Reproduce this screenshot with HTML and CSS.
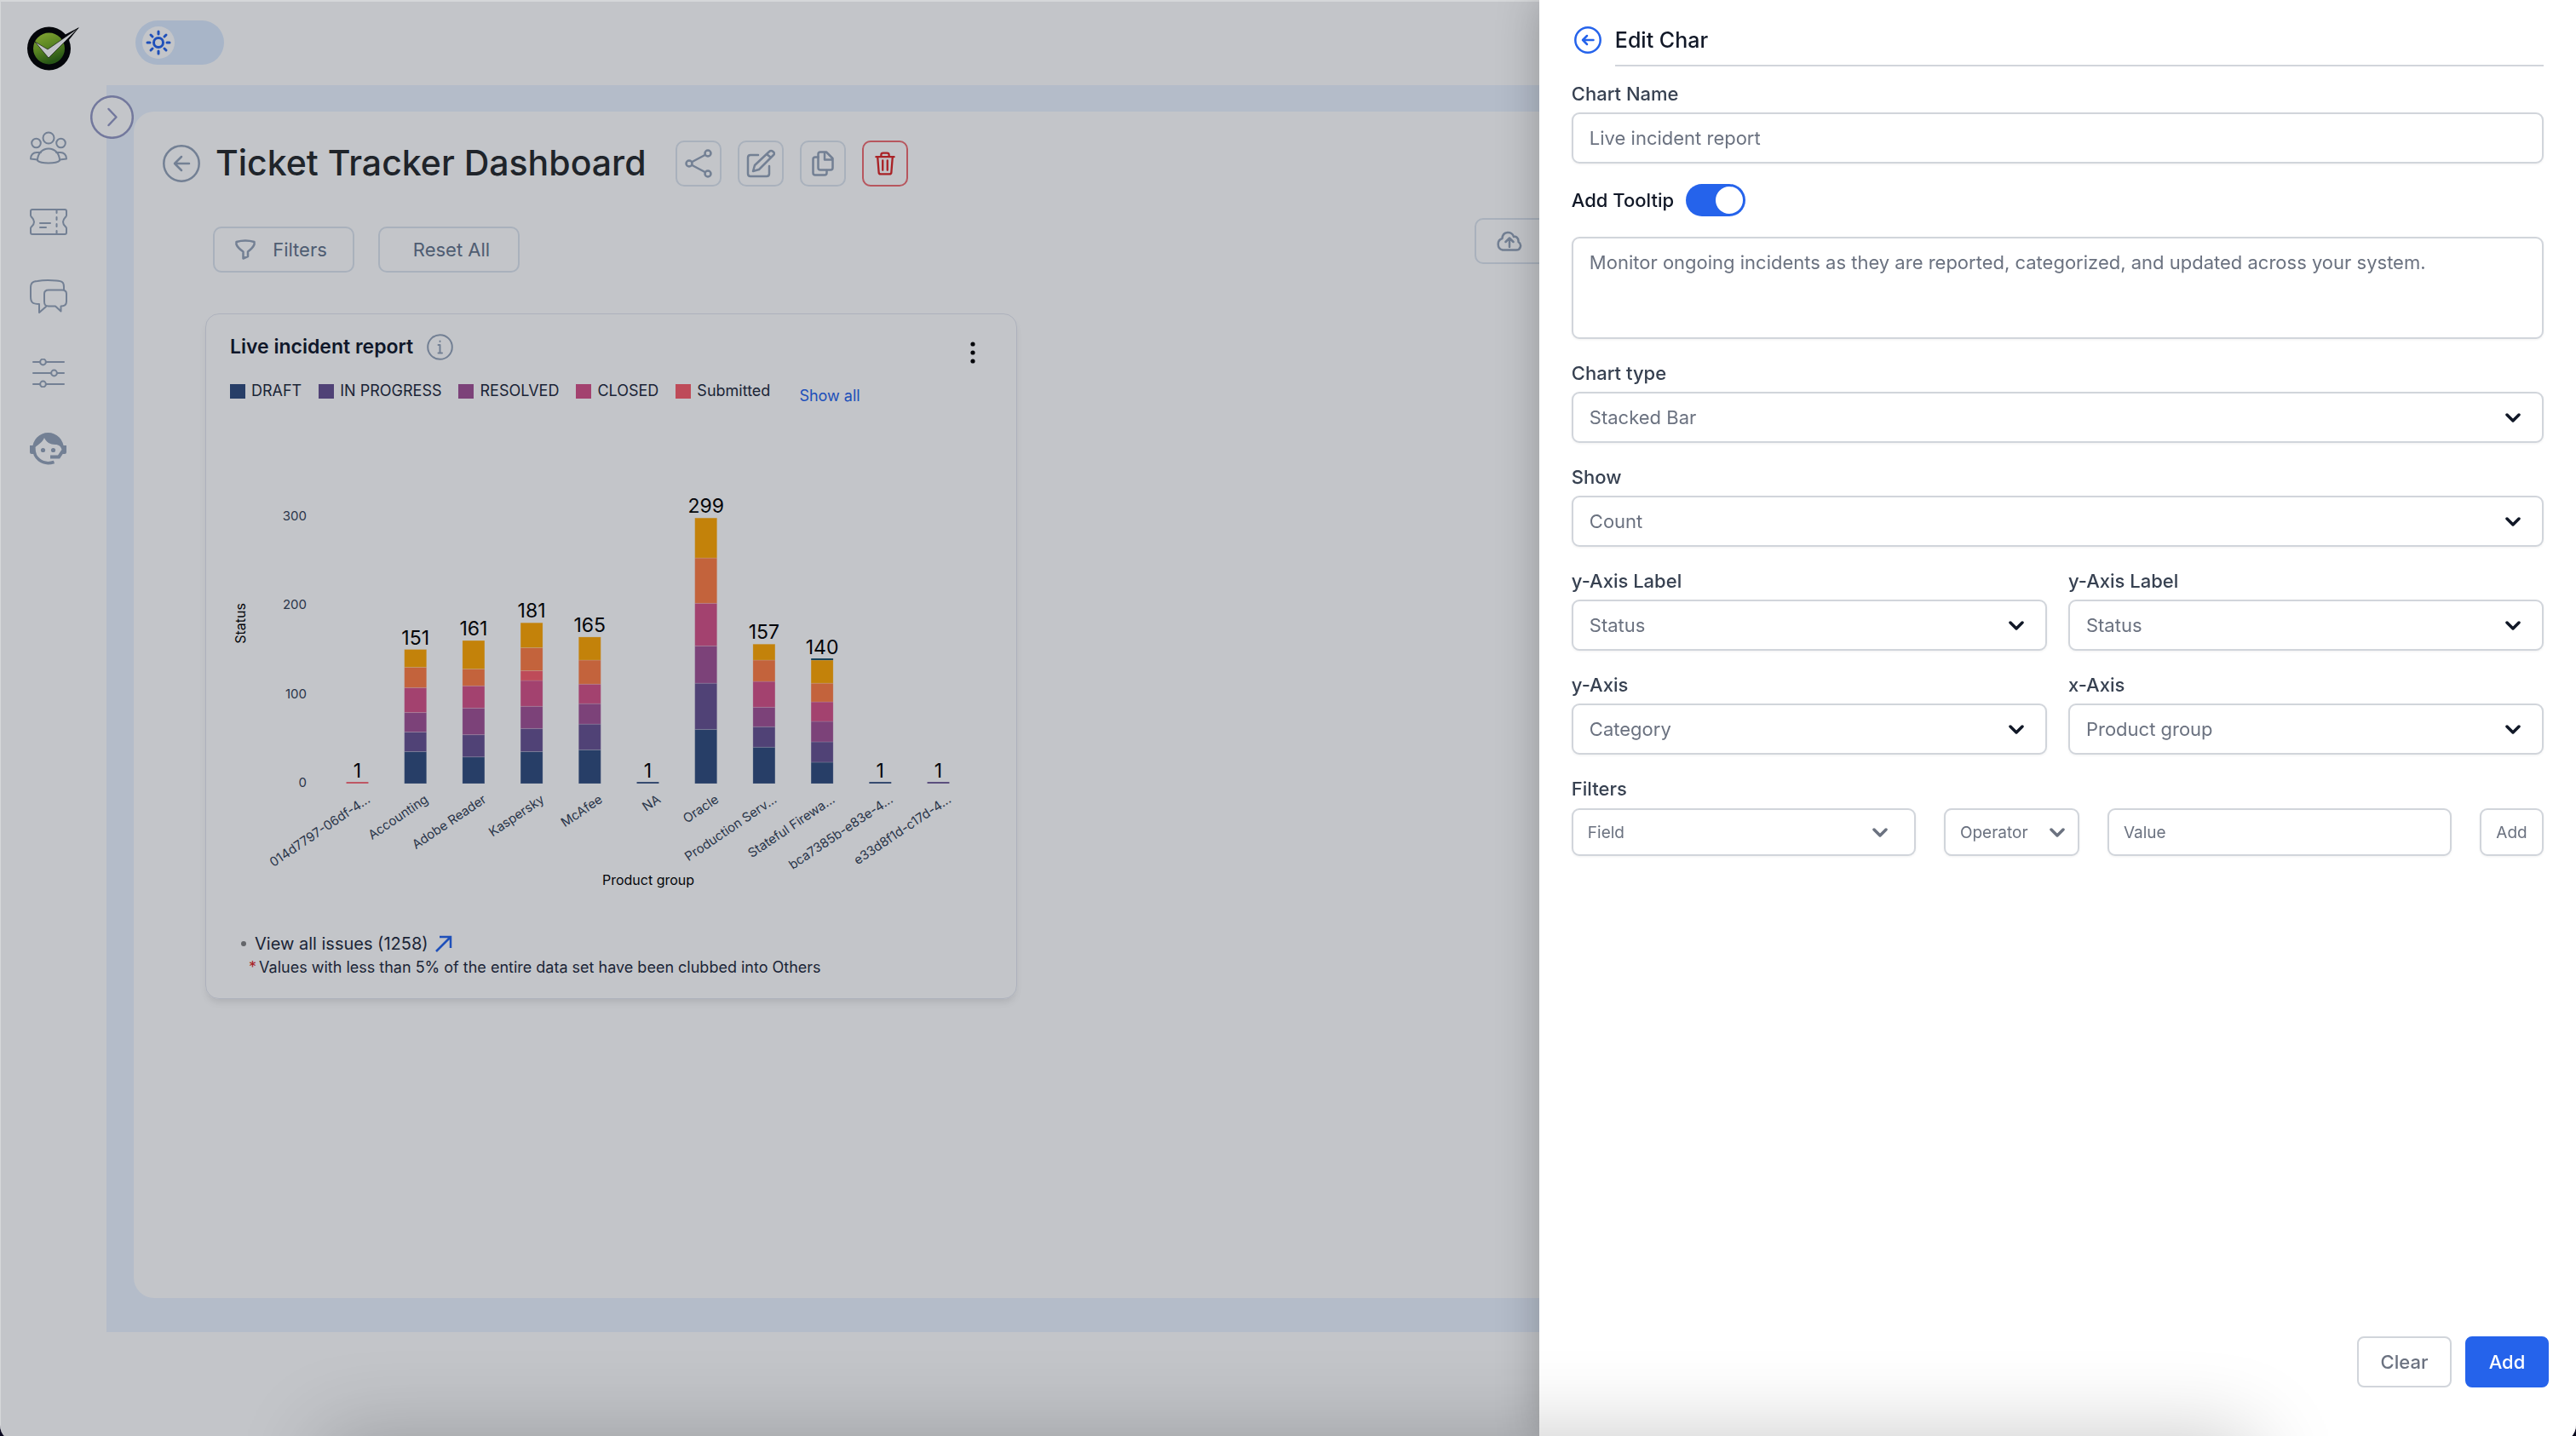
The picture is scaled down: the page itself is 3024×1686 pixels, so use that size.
FILE: index.html
```html
<!DOCTYPE html>
<html lang="en">
<head>
    <meta charset="UTF-8">
    <meta name="viewport" content="width=device-width, initial-scale=1.0">
    <title>Ticket Tracker Dashboard</title>
    <link rel="stylesheet" href="styles.css">
</head>
<body>
    <div class="app">
        <nav class="sidebar">
            <a href="#" class="logo" aria-label="Home">
                <svg width="62" height="52" viewBox="0 0 62 52">
                    <defs>
                        <linearGradient id="leaf" x1="0" y1="0" x2="0.4" y2="1">
                            <stop offset="0" stop-color="#b0d73a"/>
                            <stop offset="0.5" stop-color="#76ad22"/>
                            <stop offset="1" stop-color="#2f6a10"/>
                        </linearGradient>
                    </defs>
                    <path d="M44 22L61 1L36 14Z" fill="#000"/>
                    <circle cx="25.500" cy="26" r="25.500" fill="#000"/>
                    <circle cx="25.500" cy="26" r="18.500" fill="url(#leaf)"/>
                    <path d="M9 18L24 27L60 2L25 37Z" fill="#fff" stroke="#000" stroke-width="0.600"/>
                </svg>
            </a>
            <a href="#" aria-label="Users">
                <svg width="44" height="39" viewBox="0 0 44 39" class="line">
                    <circle cx="22" cy="8" r="6.500"/><circle cx="7.500" cy="14" r="5.300"/><circle cx="36.500" cy="14" r="5.300"/>
                    <path d="M9 34.500C9 26 15 20.500 22 20.500S35 26 35 34.500C31 38.500 13 38.500 9 34.500Z"/>
                    <path d="M9 33.500L1 32.500C1 28 4 25 8 25H13M35 33.500L43 32.500C43 28 40 25 36 25H31"/>
                </svg>
            </a>
            <a href="#" aria-label="Tickets">
                <svg width="44" height="31" viewBox="0 0 44 31" class="line">
                    <path d="M3 1H41Q43 1 43 3V8C43 10 39 11 39 15.500S43 21 43 23V28Q43 30 41 30H3Q1 30 1 28V23C1 21 5 20 5 15.500S1 10 1 8V3Q1 1 3 1Z"/>
                    <path d="M12 17H24M12 22H19M31.500 2V5M31.500 10V13M31.500 18V21M31.500 26V29"/>
                </svg>
            </a>
            <a href="#" aria-label="Chats">
                <svg width="44" height="41" viewBox="0 0 44 41" class="line">
                    <path d="M40 12V9C40 3 38 2 31 1.500C24 1 15 1 9 2C3 2.500 1 4 1 10V20C1 27 3 29 11 29V39L19 32"/>
                    <path d="M22 12.500H38C42 12.500 43 14 43 17V26C43 30 41 31.500 36.500 31.500V37.500L30 31.500H22C18 31.500 17 30 17 26V17C17 14 18 12.500 22 12.500Z"/>
                </svg>
            </a>
            <a href="#" aria-label="Settings">
                <svg width="38" height="34" viewBox="0 0 38 34" class="line">
                    <path d="M1 4H9M16 4H37M1 17H22M29 17H37M1 30H9M16 30H37"/>
                    <circle cx="12.500" cy="4" r="3.400"/><circle cx="25.500" cy="17" r="3.400"/><circle cx="12.500" cy="30" r="3.400"/>
                </svg>
            </a>
            <a href="#" aria-label="Support">
                <svg width="44" height="40" viewBox="0 0 44 40">
                    <g fill="#94a3b8">
                        <path d="M0 16H5V26H2Q0 26 0 24ZM43 16H38V26H41Q43 26 43 24Z"/>
                        <path d="M3 20A18.500 19 0 0 1 40 20L38 23C37 17 34 15 30 15C24 15 19 12 17 7C15 12 10 15 6.500 18Z"/>
                        <circle cx="15.500" cy="21.500" r="2.600"/><circle cx="27.500" cy="21.500" r="2.600"/>
                    </g>
                    <path d="M5 18C4 30 14 40 28.500 35.500" fill="none" stroke="#94a3b8" stroke-width="3.500"/>
                    <path d="M24 29.500H34L39 22" fill="none" stroke="#94a3b8" stroke-width="4"/>
                </svg>
            </a>
        </nav>

        <div class="content">
            <header class="topbar">
                <label class="theme-toggle">
                    <input type="checkbox" aria-label="Dark theme">
                    <svg width="38" height="38" viewBox="0 0 38 38">
                        <circle cx="19" cy="19" r="19" fill="#fff"/>
                        <g fill="none" stroke="#2563eb" stroke-width="3" stroke-linecap="round">
                            <circle cx="19" cy="19" r="5.500"/>
                            <path d="M19 6V9M19 29V32M6 19H9M29 19H32M10 10L12 12M26 26L28 28M10 28L12 26M26 12L28 10"/>
                        </g>
                    </svg>
                </label>
            </header>

            <main class="workspace">
                <button class="expand" aria-label="Expand menu">
                    <svg width="51" height="51" viewBox="0 0 51 51">
                        <circle cx="25.500" cy="25.500" r="24.300"/>
                        <path d="M21.500 16L30.500 25.500L21.500 35"/>
                    </svg>
                </button>

                <section class="panel">
                    <div class="title-row">
                        <a href="#" class="back" aria-label="Back">
                            <svg width="44" height="44" viewBox="0 0 44 44" class="line thick">
                                <circle cx="22" cy="22" r="20.700"/>
                                <path d="M31 22H14M22 14L14 22L22 30"/>
                            </svg>
                        </a>
                        <h1>Ticket Tracker Dashboard</h1>
                        <div class="actions">
                            <button class="btn icon" aria-label="Share">
                                <svg width="32" height="34" viewBox="0 0 32 34" class="line thick">
                                    <circle cx="5" cy="17" r="3.500"/><circle cx="27" cy="5" r="3.500"/><circle cx="27" cy="29" r="3.500"/>
                                    <path d="M8.500 15L23.500 7M8.500 19L23.500 27"/>
                                </svg>
                            </button>
                            <button class="btn icon" aria-label="Edit">
                                <svg width="34" height="34" viewBox="0 0 34 34" class="line thick">
                                    <path d="M14 7H5Q2 7 2 10V29Q2 32 5 32H24Q27 32 27 29V20"/>
                                    <path d="M8 26L10 19L27 3Q29 1 31.500 3T32 7L15 24ZM24 6L29 10"/>
                                </svg>
                            </button>
                            <button class="btn icon" aria-label="Copy">
                                <svg width="26" height="30" viewBox="0 0 26 30" class="line thick">
                                    <path d="M10 1.500H17L24.500 9V20Q24.500 22.500 22 22.500H10Q7.500 22.500 7.500 20V4Q7.500 1.500 10 1.500ZM15 2V10.500H24"/>
                                    <path d="M7.500 7.500H4Q1.500 7.500 1.500 10V26Q1.500 28.500 4 28.500H15Q17.500 28.500 17.500 26V23"/>
                                </svg>
                            </button>
                            <button class="btn icon danger" aria-label="Delete">
                                <svg width="24" height="30" viewBox="0 0 26 30" class="line thick">
                                    <path d="M1.500 6.500H24.500M8 6V4Q8 1.500 10.500 1.500H15.500Q18 1.500 18 4V6M3.500 7L5 26Q5 28.500 7.500 28.500H18.500Q21 28.500 21 26L22.500 7M10 11V23.500M16 11V23.500"/>
                                </svg>
                            </button>
                        </div>
                    </div>

                    <div class="toolbar">
                        <div class="toolbar-left">
                            <button class="btn wide filters">
                                <svg width="24" height="24" viewBox="0 0 24 24" class="line thick">
                                    <path d="M1.500 3Q12 0 22.500 3V6Q21 10 15 14.500V20L9.500 22.500V14.500Q3 10 1.500 6Z"/>
                                </svg>
                                Filters
                            </button>
                            <button class="btn wide reset">Reset All</button>
                        </div>
                        <div class="toolbar-right">
                            <button class="btn export" aria-label="Export">
                                <svg width="30" height="24" viewBox="0 0 30 24" class="line thick">
                                    <path d="M7 22.500H23C28 22.500 30 16 25.500 13C26 8 22 6 20 7C18 0 7 0 6.500 9C0 11 0 21 7 22.500ZM15 19V9M10.500 13L15 8.500L19.500 13"/>
                                </svg>
                            </button>
                        </div>
                    </div>

                    <article class="card">
                        <div class="card-head">
                            <h2>Live incident report</h2>
                            <svg width="31" height="31" viewBox="0 0 31 31" class="line">
                                <circle cx="15.500" cy="15.500" r="14.300"/>
                                <path d="M13.500 13H15.500V22M13.500 22.500H18M15.500 8.500V9"/>
                            </svg>
                            <button class="kebab" aria-label="More">
                                <svg width="6" height="28" viewBox="0 0 6 28"><circle cx="3" cy="4" r="2.600"/><circle cx="3" cy="14" r="2.600"/><circle cx="3" cy="24" r="2.600"/></svg>
                            </button>
                        </div>
                        <ul class="legend">
                            <li><i class="draft"></i>DRAFT</li>
                            <li><i class="progress"></i>IN PROGRESS</li>
                            <li><i class="resolved"></i>RESOLVED</li>
                            <li><i class="closed"></i>CLOSED</li>
                            <li><i class="submitted"></i>Submitted</li>
                            <li class="show-all"><a href="#">Show all</a></li>
                        </ul>
                        <svg id="chart" class="chart" viewBox="0 0 895 587" role="img" aria-label="Tickets by product group and status"></svg>
                        <div class="card-foot">
                            <a href="#" class="view-all">View all issues (1258)
                                <svg width="20" height="20" viewBox="0 0 20 20"><path d="M1 19L18 2M5 2H18V15"/></svg>
                            </a>
                            <p class="note"><span>*</span>Values with less than 5% of the entire data set have been clubbed into Others</p>
                        </div>
                    </article>
                </section>
            </main>
        </div>
    </div>

    <div class="overlay"></div>

    <aside class="drawer">
        <div class="drawer-head">
            <a href="#" aria-label="Close">
                <svg width="32" height="32" viewBox="0 0 32 32">
                    <circle cx="16" cy="16" r="14.700"/>
                    <path d="M22.500 16H10M15 11L10 16L15 21"/>
                </svg>
            </a>
            <h2>Edit Char</h2>
        </div>
        <form class="drawer-form" onsubmit="return false">
            <div class="stack">
                <div class="field">
                    <label for="name">Chart Name</label>
                    <input type="text" id="name" class="control" value="Live incident report">
                </div>
                <div class="switch-row">
                    <label for="tip">Add Tooltip</label>
                    <input type="checkbox" id="tip" class="switch" checked>
                </div>
                <textarea class="control" aria-label="Tooltip text">Monitor ongoing incidents as they are reported, categorized, and updated across your system.</textarea>
            </div>
            <div class="field">
                <label for="type">Chart type</label>
                <div class="select"><select id="type" class="control"><option>Stacked Bar</option></select><svg width="18" height="12" viewBox="0 0 18 12"><path d="M2 2L9 9L16 2"/></svg></div>
            </div>
            <div class="field">
                <label for="show">Show</label>
                <div class="select"><select id="show" class="control"><option>Count</option></select><svg width="18" height="12" viewBox="0 0 18 12"><path d="M2 2L9 9L16 2"/></svg></div>
            </div>
            <div class="pair">
                <div class="field">
                    <label for="yl1">y-Axis Label</label>
                    <div class="select"><select id="yl1" class="control"><option>Status</option></select><svg width="18" height="12" viewBox="0 0 18 12"><path d="M2 2L9 9L16 2"/></svg></div>
                </div>
                <div class="field">
                    <label for="yl2">y-Axis Label</label>
                    <div class="select"><select id="yl2" class="control"><option>Status</option></select><svg width="18" height="12" viewBox="0 0 18 12"><path d="M2 2L9 9L16 2"/></svg></div>
                </div>
                <div class="field">
                    <label for="ya">y-Axis</label>
                    <div class="select"><select id="ya" class="control"><option>Category</option></select><svg width="18" height="12" viewBox="0 0 18 12"><path d="M2 2L9 9L16 2"/></svg></div>
                </div>
                <div class="field">
                    <label for="xa">x-Axis</label>
                    <div class="select"><select id="xa" class="control"><option>Product group</option></select><svg width="18" height="12" viewBox="0 0 18 12"><path d="M2 2L9 9L16 2"/></svg></div>
                </div>
            </div>
            <div class="field">
                <label for="ff">Filters</label>
                <div class="filter-row">
                    <div class="select grow"><select id="ff" class="control"><option>Field</option></select><svg width="18" height="12" viewBox="0 0 18 12"><path d="M2 2L9 9L16 2"/></svg></div>
                    <div class="select op"><select class="control" aria-label="Operator"><option>Operator</option></select><svg width="18" height="12" viewBox="0 0 18 12"><path d="M2 2L9 9L16 2"/></svg></div>
                    <div class="grow"><input type="text" class="control" placeholder="Value" aria-label="Value"></div>
                    <button class="control add">Add</button>
                </div>
            </div>
        </form>
        <div class="drawer-foot">
            <button class="clear">Clear</button>
            <button class="primary">Add</button>
        </div>
    </aside>

    <div class="dock-shadow"></div>

    <script>
        const colors = ['#2f4b7c', '#665191', '#a05195', '#d45087', '#f95d6a', '#ff7c43', '#ffa600', '#003f5c'];
        const groups = [
            ['014d7797-06df-4...', [0, 0, 0, 0, 1]],
            ['Accounting', [36, 22, 22, 28, 0, 23, 20]],
            ['Adobe Reader', [30, 25, 30, 25, 0, 19, 32]],
            ['Kaspersky', [36, 26, 25, 29, 11, 26, 28]],
            ['McAfee', [38, 29, 23, 22, 0, 27, 26]],
            ['NA', [1]],
            ['Oracle', [61, 52, 42, 48, 0, 51, 45]],
            ['Production Serv...', [41, 23, 22, 29, 0, 24, 18]],
            ['Stateful Firewa...', [24, 23, 23, 22, 0, 21, 26, 1]],
            ['bca7385b-e83e-4...', [1]],
            ['e33d8f1d-c17d-4...', [0, 1]]
        ];
        const base = 437;
        const unit = 1.043;
        const barWidth = 26;
        let out = '';

        for (let v = 0; v <= 300; v += 100) {
            out += `<text class="tick" x="90" y="${base + 4 - v * unit}" text-anchor="end">${v}</text>`;
        }

        groups.forEach(([name, values], i) => {
            const x = 149.5 + i * 68.2;
            let sum = 0;
            values.forEach((v, k) => {
                if (!v) return;
                const h = Math.max(v * unit, 2);
                out += `<rect x="${x - barWidth / 2}" y="${base - sum * unit - h}" width="${barWidth}" height="${h}" fill="${colors[k]}"/>`;
                sum += v;
            });
            out += `<text class="total" x="${x}" y="${base - sum * unit - 6}" text-anchor="middle">${sum}</text>`;
            out += `<text class="tick" text-anchor="end" transform="translate(${x + 16} ${base + 21}) rotate(-34)">${name}</text>`;
        });

        out += `<text class="axis" x="491" y="556" text-anchor="middle">Product group</text>`;
        out += `<text class="axis" text-anchor="middle" transform="translate(18 249) rotate(-90)">Status</text>`;
        document.getElementById('chart').innerHTML = out;
    </script>
</body>
</html>
```
FILE: styles.css
```css
* {
    box-sizing: border-box;
}
body {
    margin: 0;
    height: 100vh;
    font-family: Inter, "Liberation Sans", sans-serif;
    background: #0a0920;
    color: #1e293b;
    overflow: hidden;
}
h1, h2, p, ul {
    margin: 0;
    padding: 0;
}
a {
    color: inherit;
    text-decoration: none;
}
button, input, select, textarea {
    font: inherit;
    color: inherit;
    margin: 0;
}
button {
    cursor: pointer;
    background: none;
    border: none;
    padding: 0;
}
svg {
    display: block;
    flex: none;
}
.line {
    fill: none;
    stroke: #94a3b8;
    stroke-width: 2;
    stroke-linecap: round;
    stroke-linejoin: round;
}
.thick {
    stroke-width: 2.5;
}

/* page shell */
.app {
    display: flex;
    min-height: calc(100vh + 7px);
    background: #fff;
    border-radius: 0 0 20px 20px;
}
.sidebar {
    width: 125px;
    padding-top: 31px;
    padding-right: 11px;
    display: flex;
    flex-direction: column;
    align-items: center;
    gap: 52px;
}
.logo {
    margin-left: 11px;
    margin-bottom: 19px;
}
.content {
    flex: 1;
    display: flex;
    flex-direction: column;
}
.topbar {
    height: 100px;
    padding: 24px 34px;
}
.theme-toggle {
    position: relative;
    display: block;
    width: 104px;
    height: 52px;
}
.theme-toggle input {
    appearance: none;
    display: block;
    width: 100%;
    height: 100%;
    border-radius: 26px;
    background: #dbeafe;
}
.theme-toggle svg {
    position: absolute;
    left: 8px;
    top: 7px;
}
.workspace {
    position: relative;
    flex: 1;
    display: flex;
    margin-bottom: 129px;
    padding: 31px 32px 40px;
    background: #ebf3ff;
}
.expand {
    position: absolute;
    left: -19px;
    top: 12px;
}
.expand svg {
    fill: none;
    stroke: #9499c4;
    stroke-width: 2.5;
    stroke-linecap: round;
    stroke-linejoin: round;
}
.expand circle {
    fill: #fff;
}
.panel {
    flex: 1;
    padding: 34px;
    background: #fff;
    border-radius: 24px;
}
.title-row {
    display: flex;
    align-items: center;
    gap: 18px;
}
h1 {
    font-size: 41px;
    font-weight: 500;
    line-height: 50px;
    padding-bottom: 2px;
    color: #25282b;
}
.actions {
    display: flex;
    gap: 19px;
    margin-left: 16px;
}
.btn {
    display: flex;
    align-items: center;
    justify-content: center;
    height: 54px;
    border: 2px solid #dce4ee;
    border-radius: 10px;
    color: #64748b;
    font-size: 22px;
}
.icon {
    width: 54px;
}
.danger {
    border-color: #ef6b70;
}
.danger .line {
    stroke: #dc2626;
}
.toolbar {
    display: flex;
    justify-content: space-between;
    align-items: flex-start;
    margin-top: 37px;
}
.toolbar-left {
    display: flex;
    gap: 28px;
    padding: 10px 0 0 59px;
}
.wide {
    width: 166px;
}
.filters {
    gap: 20px;
    padding-right: 6px;
}
.reset {
    padding-left: 6px;
}
.toolbar-right {
    width: 45%;
    padding-left: 18px;
}
.export {
    width: 166px;
    justify-content: flex-start;
    padding-left: 24px;
}

/* chart card */
.card {
    width: 953px;
    margin: 48px 0 0 50px;
    padding: 22px 28px;
    border: 1px solid #e2e5ee;
    border-radius: 16px;
    box-shadow: 0 6px 8px -2px rgba(0, 0, 0, 0.1);
}
.card-head {
    display: flex;
    align-items: center;
    gap: 16px;
    height: 32px;
}
.card-head h2 {
    font-size: 23px;
    font-weight: 600;
    color: #0f172a;
}
.kebab {
    margin-left: auto;
    padding: 14px 20px 0 0;
}
.legend {
    display: flex;
    align-items: flex-start;
    gap: 20px;
    margin-top: 24px;
    list-style: none;
    font-size: 18px;
    line-height: 24px;
}
.legend li {
    display: flex;
    align-items: center;
    gap: 7px;
}
.legend i {
    width: 18px;
    height: 17px;
}
.draft {
    background: #2f4b7c;
}
.progress {
    background: #665191;
}
.resolved {
    background: #a05195;
}
.closed {
    background: #d45087;
}
.submitted {
    background: #f95d6a;
}
.legend .show-all {
    margin-left: 14px;
    line-height: 36px;
    color: #2563eb;
}
.chart {
    width: 100%;
}
.chart rect {
    stroke: rgba(255, 255, 255, 0.2);
}
.tick {
    font-size: 15px;
    fill: #334155;
}
.total {
    font-size: 23px;
    fill: #000;
}
.axis {
    font-size: 16px;
    fill: #000;
}
.card-foot {
    padding: 24px 0 0 13px;
    line-height: 28px;
}
.view-all {
    display: flex;
    align-items: center;
    gap: 8px;
    font-size: 20px;
}
.view-all::before {
    content: "";
    width: 6px;
    height: 6px;
    margin-right: 2px;
    border-radius: 50%;
    background: #808080;
}
.view-all svg {
    fill: none;
    stroke: #2563eb;
    stroke-width: 2.5;
}
.note {
    display: flex;
    gap: 3px;
    padding-left: 9px;
    font-size: 18px;
}
.note span {
    color: #dc2626;
}

.overlay {
    position: fixed;
    inset: 0 0 -7px;
    background: rgba(17, 24, 39, 0.25);
    box-shadow: inset 1px 2px 0 rgba(255, 255, 255, 0.3);
    border-radius: 0 0 20px 20px;
}

/* edit drawer */
.drawer {
    position: fixed;
    top: 0;
    right: 0;
    bottom: -7px;
    width: 40.25%;
    display: flex;
    flex-direction: column;
    padding: 29px 38px 64px;
    background: #fff;
    border-radius: 0 0 20px 0;
    box-shadow: 0 0 50px rgba(0, 0, 0, 0.25);
    font-size: 22px;
}
.drawer-head {
    display: flex;
    gap: 16px;
    padding-left: 3px;
    margin-bottom: 18px;
}
.drawer-head a {
    padding-top: 2px;
}
.drawer-head svg {
    fill: none;
    stroke: #2563eb;
    stroke-width: 2.5;
    stroke-linecap: round;
    stroke-linejoin: round;
}
.drawer-head h2 {
    flex: 1;
    padding-bottom: 11px;
    border-bottom: 2px solid #d1d5db;
    font-size: 25px;
    font-weight: 500;
    line-height: 36px;
    color: #111827;
}
.drawer-form {
    display: flex;
    flex-direction: column;
    gap: 26px;
}
.stack {
    display: flex;
    flex-direction: column;
    gap: 24px;
}
.field {
    display: flex;
    flex-direction: column;
    gap: 8px;
}
.field label {
    line-height: 28px;
    font-weight: 500;
    color: #374151;
}
.control {
    appearance: none;
    display: block;
    width: 100%;
    height: 60px;
    padding: 0 19px;
    border: 2px solid #d1d5db;
    border-radius: 9px;
    background: #fff;
    color: #6b7280;
    box-shadow: 0 1px 3px rgba(0, 0, 0, 0.06);
}
.control::placeholder {
    color: #6b7280;
}
textarea.control {
    height: 120px;
    padding: 12px 19px;
    line-height: 32px;
    resize: none;
}
.switch-row {
    display: flex;
    align-items: center;
    gap: 14px;
    font-weight: 500;
    color: #111827;
}
.switch {
    appearance: none;
    width: 70px;
    height: 38px;
    padding: 3px;
    border-radius: 19px;
    background: #2563eb;
}
.switch::before {
    content: "";
    display: block;
    width: 32px;
    height: 32px;
    margin-left: auto;
    border-radius: 50%;
    background: #fff;
}
.select {
    position: relative;
}
.select svg {
    position: absolute;
    right: 27px;
    top: 50%;
    margin-top: -5px;
    fill: none;
    stroke: #111827;
    stroke-width: 3.5;
    stroke-linecap: round;
    stroke-linejoin: round;
    pointer-events: none;
}
.pair {
    display: grid;
    grid-template-columns: 1fr 1fr;
    gap: 26px 25px;
}
.filter-row {
    display: flex;
    gap: 33px;
    margin-top: 1px;
    font-size: 19px;
}
.filter-row .control {
    height: 56px;
    padding: 0 17px;
}
.filter-row .select svg {
    stroke: #6b7280;
    right: 33px;
}
.grow {
    flex: 1;
}
.op {
    width: 159px;
}
.filter-row .op svg {
    right: 17px;
}
.filter-row .add {
    width: 75px;
    padding: 0;
}
.drawer-foot {
    display: flex;
    justify-content: flex-end;
    gap: 16px;
    margin-top: auto;
    margin-right: -6px;
}
.drawer-foot button {
    width: 111px;
    height: 60px;
    border: 2px solid #d1d5db;
    border-radius: 8px;
    font-weight: 500;
    color: #6b7280;
}
.drawer-foot .primary {
    width: 98px;
    border-color: #2563eb;
    background: #2563eb;
    color: #fff;
}

.dock-shadow {
    position: fixed;
    top: 100%;
    left: 380px;
    right: 380px;
    height: 200px;
    box-shadow: 0 0 100px rgba(0, 0, 0, 0.22);
    pointer-events: none;
}
```
